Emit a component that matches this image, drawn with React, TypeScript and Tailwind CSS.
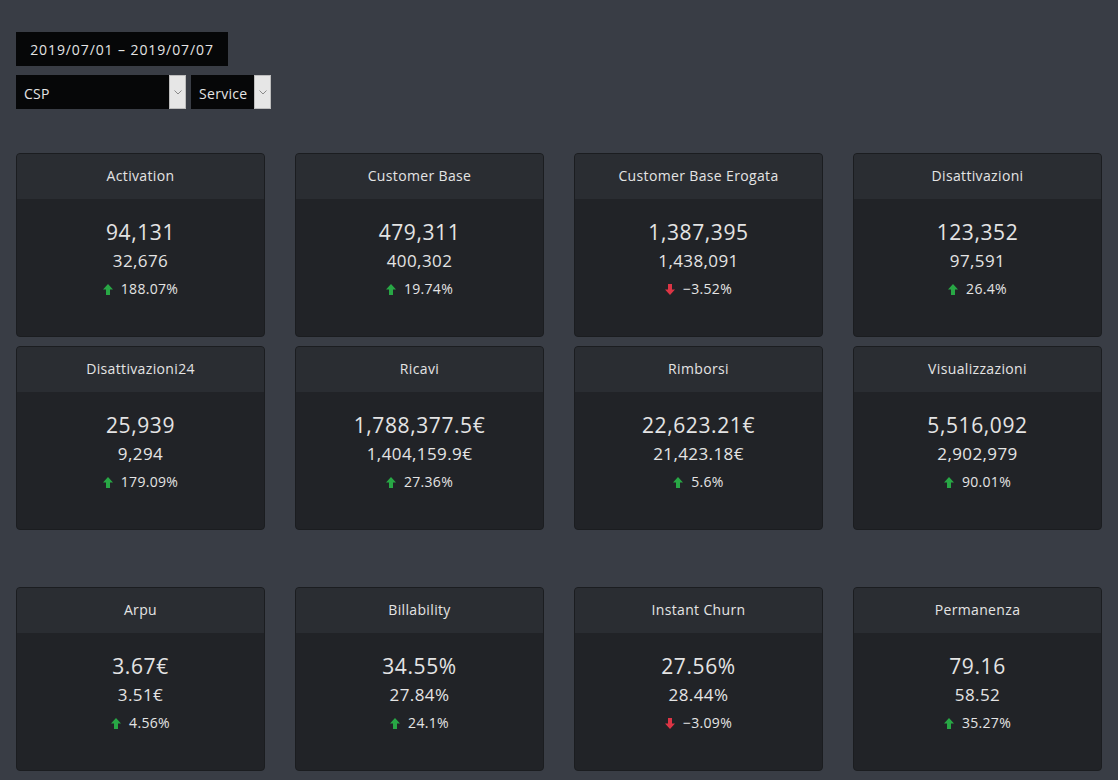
import React from 'react';

interface Kpi {
  title: string;
  value: string;
  previous: string;
  delta: string;
  up: boolean;
}

const mainKpis: Kpi[] = [
  { title: 'Activation', value: '94,131', previous: '32,676', delta: '188.07%', up: true },
  { title: 'Customer Base', value: '479,311', previous: '400,302', delta: '19.74%', up: true },
  { title: 'Customer Base Erogata', value: '1,387,395', previous: '1,438,091', delta: '-3.52%', up: false },
  { title: 'Disattivazioni', value: '123,352', previous: '97,591', delta: '26.4%', up: true },
  { title: 'Disattivazioni24', value: '25,939', previous: '9,294', delta: '179.09%', up: true },
  { title: 'Ricavi', value: '1,788,377.5€', previous: '1,404,159.9€', delta: '27.36%', up: true },
  { title: 'Rimborsi', value: '22,623.21€', previous: '21,423.18€', delta: '5.6%', up: true },
  { title: 'Visualizzazioni', value: '5,516,092', previous: '2,902,979', delta: '90.01%', up: true },
];

const ratioKpis: Kpi[] = [
  { title: 'Arpu', value: '3.67€', previous: '3.51€', delta: '4.56%', up: true },
  { title: 'Billability', value: '34.55%', previous: '27.84%', delta: '24.1%', up: true },
  { title: 'Instant Churn', value: '27.56%', previous: '28.44%', delta: '-3.09%', up: false },
  { title: 'Permanenza', value: '79.16', previous: '58.52', delta: '35.27%', up: true },
];

const Arrow = ({ up }: { up: boolean }) => (
  <svg
    width="10"
    height="11"
    viewBox="0 0 10 11"
    className={up ? 'text-[#28a745]' : 'text-[#dc3545] rotate-180'}
    fill="currentColor"
  >
    <path d="M5 0 L10 5.5 L7 5.5 L7 11 L3 11 L3 5.5 L0 5.5 Z" />
  </svg>
);

const KpiCard = ({ kpi }: { kpi: Kpi }) => (
  <div className="h-[184px] rounded-[4px] border border-[#1b1d20] bg-[#212327] overflow-hidden flex flex-col">
    <div className="h-[45px] shrink-0 bg-[#2a2d32] flex items-center justify-center pb-[2px] text-[14px] tracking-[0.35px] text-[#e4e4e4]">
      {kpi.title}
    </div>
    <div className="flex flex-col items-center pt-[19px] text-[#e4e4e4]">
      <div className="text-[21px] leading-[28px] tracking-[0.6px]">{kpi.value}</div>
      <div className="text-[17px] leading-[24px] mt-[3px] tracking-[0.4px]">{kpi.previous}</div>
      <div className="flex items-center gap-[8px] text-[14px] leading-[20px] mt-[6px] tracking-[0.3px]">
        <Arrow up={kpi.up} />
        <span>{kpi.delta.replace('-', '\u2212')}</span>
      </div>
    </div>
  </div>
);

const SelectBox = ({ label, width }: { label: string; width: string }) => (
  <div className="flex h-[34px]">
    <div className={`${width} bg-[#060708] text-[#e4e4e4] text-[14px] tracking-[0.3px] flex items-center pt-[2px] px-[8px]`}>
      {label}
    </div>
    <div className="w-[17px] bg-[#e6e6e6] border border-[#bdbdbd] flex items-center justify-center">
      <svg width="8" height="5" viewBox="0 0 8 5" fill="none" stroke="#8a8a8a" strokeWidth="1">
        <path d="M0.5 0.5 L4 4 L7.5 0.5" />
      </svg>
    </div>
  </div>
);

export default function App() {
  return (
    <div
      className="min-h-[780px] w-full bg-[#393d45] px-[16px] pt-[32px] pb-[8px]"
      style={{ fontFamily: '"Open Sans", "Liberation Sans", sans-serif' }}
    >
      <div className="inline-flex h-[34px] w-[212px] items-center justify-center bg-[#060708] text-[14px] text-[#e4e4e4] tracking-[0.9px]">
        2019/07/01 – 2019/07/07
      </div>
      <div className="mt-[9px] flex gap-[5px]">
        <SelectBox label="CSP" width="w-[153px]" />
        <SelectBox label="Service" width="w-[63px]" />
      </div>

      <div className="mt-[44px] grid grid-cols-4 gap-x-[30px] gap-y-[9px]">
        {mainKpis.map((k) => (
          <KpiCard key={k.title} kpi={k} />
        ))}
      </div>

      <div className="mt-[57px] grid grid-cols-4 gap-x-[30px] gap-y-[9px]">
        {ratioKpis.map((k) => (
          <KpiCard key={k.title} kpi={k} />
        ))}
      </div>
    </div>
  );
}
